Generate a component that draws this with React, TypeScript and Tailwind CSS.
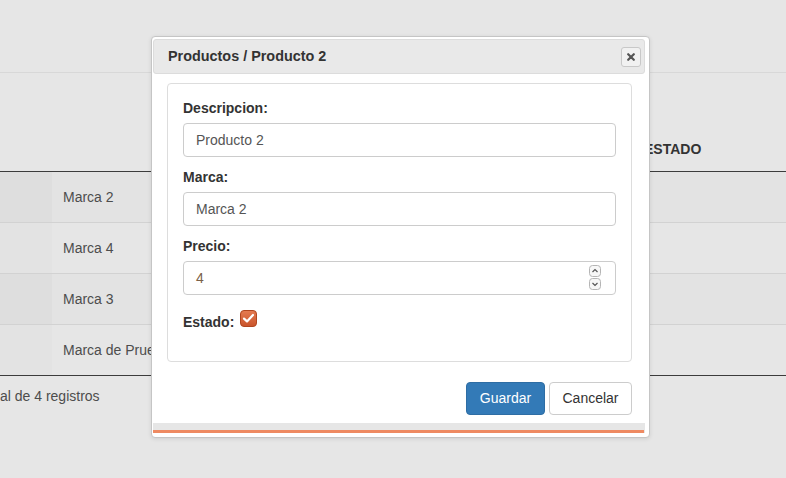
import React from "react";

const rows = [
  { marca: "Marca 2", odd: true },
  { marca: "Marca 4", odd: false },
  { marca: "Marca 3", odd: true },
  { marca: "Marca de Prueba", odd: false },
];

const Field = ({ label, value, number }: { label: string; value: string; number?: boolean }) => {
  return (
    <div className="mb-[10px]">
      <div className="mb-[5px] text-[14px] leading-[20px] font-bold text-[#333]">{label}</div>
      <div className="relative flex h-[34px] items-center rounded-[4px] border border-[#cccccc] bg-white px-[12px] text-[14px]">
        <span className={number ? "text-[#7a6048]" : "text-[#555]"}>{value}</span>
        {number && (
          <div className="absolute right-[14px] top-[3px] flex flex-col gap-[1px]">
            <svg width="12" height="12" viewBox="0 0 12 12">
              <rect x="0.5" y="0.5" width="11" height="11" rx="3" fill="#f7f7f7" stroke="#b5b5b5" />
              <path d="M3.5 7 L6 4.5 L8.5 7" fill="none" stroke="#555" strokeWidth="1.2" />
            </svg>
            <svg width="12" height="12" viewBox="0 0 12 12">
              <rect x="0.5" y="0.5" width="11" height="11" rx="3" fill="#f7f7f7" stroke="#b5b5b5" />
              <path d="M3.5 5 L6 7.5 L8.5 5" fill="none" stroke="#555" strokeWidth="1.2" />
            </svg>
          </div>
        )}
      </div>
    </div>
  );
};

const App = () => {
  return (
    <div className="relative h-[478px] w-[786px] overflow-hidden bg-[#e6e6e6] font-['Liberation_Sans',Arial,sans-serif] text-[14px]">
      {/* page behind the overlay */}
      <div className="h-[73px] border-b border-[#d8d8d8]" />
      <div className="flex h-[99px] items-end border-b border-[#3c3c3c] pb-[12px]">
        <div className="w-[52px]" />
        <div className="w-[592px]" />
        <div className="text-[14px] leading-[20px] font-bold text-[#333]">ESTADO</div>
      </div>
      {rows.map((r, i) => (
        <div
          key={i}
          className={
            "flex h-[51px] border-b " +
            (i === rows.length - 1 ? "border-[#3c3c3c]" : "border-[#d2d2d2]") +
            (r.odd ? " bg-[#e3e3e3]" : " bg-[#e6e6e6]")
          }
        >
          <div className={"w-[52px] " + (r.odd ? "bg-[#dedede]" : "bg-[#e3e3e3]")} />
          <div className="flex flex-1 items-center pl-[11px] whitespace-nowrap text-[#4d4d4d]">{r.marca}</div>
        </div>
      ))}
      <div className="pt-[10px] leading-[20px] whitespace-nowrap text-[#4d4d4d]">al de 4 registros</div>

      {/* dialog */}
      <div className="absolute left-[151px] top-[36px] w-[499px] rounded-[4px] border border-[#c5c5c5] bg-white pt-[2px] pr-[4px] pb-[4px] pl-[1px] shadow-[0_1px_4px_rgba(0,0,0,0.1)]">
        <div className="flex h-[35px] items-center justify-between rounded-[3px] border border-[#dcdcdc] bg-[#e9e9e9] pr-[3px] pl-[14px]">
          <span className="text-[14.4px] font-bold text-[#333]">Productos / Producto 2</span>
          <button className="flex h-[20px] w-[20px] items-center justify-center rounded-[3px] border border-[#c8c8c8] bg-[#f1f1f1]">
            <svg width="8" height="8" viewBox="0 0 8 8">
              <path d="M1.2 1.2 L6.8 6.8 M6.8 1.2 L1.2 6.8" stroke="#555" strokeWidth="2.2" strokeLinecap="round" />
            </svg>
          </button>
        </div>

        <div className="mt-[9px] ml-[14px] w-[465px] rounded-[4px] border border-[#dddddd] px-[15px] pt-[14px] pb-[29px]">
          <Field label="Descripcion:" value="Producto 2" />
          <Field label="Marca:" value="Marca 2" />
          <Field label="Precio:" value="4" number />
          <div className="mt-[17px] flex items-start">
            <span className="text-[14px] leading-[20px] font-bold text-[#333]">Estado:</span>
            <svg className="-mt-[2px] ml-[6px]" width="17" height="17" viewBox="0 0 17 17">
              <defs>
                <linearGradient id="cb" x1="0" y1="0" x2="0" y2="1">
                  <stop offset="0" stopColor="#e57c52" />
                  <stop offset="1" stopColor="#c9532a" />
                </linearGradient>
              </defs>
              <rect x="0.5" y="0.5" width="16" height="16" rx="3.5" fill="url(#cb)" stroke="#b0461f" />
              <path d="M4 8.6 L7 11.4 L13 5" fill="none" stroke="#fff" strokeWidth="2.2" strokeLinecap="round" strokeLinejoin="round" />
            </svg>
          </div>
        </div>

        <div className="mt-[20px] ml-[14px] flex w-[465px] justify-end gap-[4px]">
          <button className="h-[33px] w-[79px] rounded-[4px] border border-[#2e6da4] bg-[#337ab7] text-[14px] text-white">
            Guardar
          </button>
          <button className="h-[33px] w-[83px] rounded-[4px] border border-[#cccccc] bg-white text-[14px] text-[#333]">
            Cancelar
          </button>
        </div>

        <div className="mt-[8px] flex h-[10px] w-[492px] flex-col justify-end bg-[#e6e6e6]">
          <div className="h-[3px] w-[491px] bg-[#ee8a62]" />
        </div>
      </div>
    </div>
  );
};

export default App;
